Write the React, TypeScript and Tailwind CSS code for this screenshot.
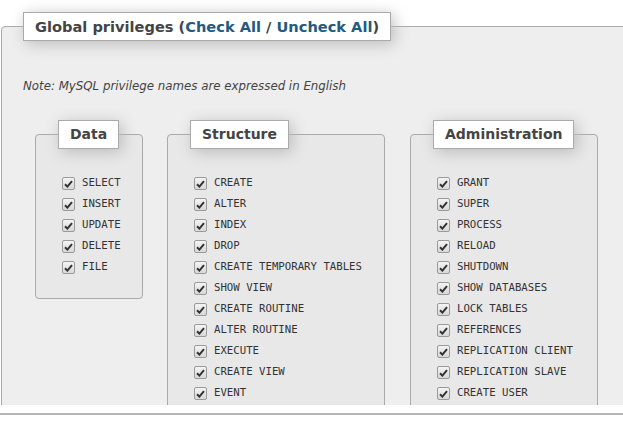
import React from "react";

type Group = {
  title: string;
  width: string;
  gap: string;
  privileges: string[];
};

const groups: Group[] = [
  {
    title: "Data",
    width: "w-[108px]",
    gap: "ml-[12px]",
    privileges: ["SELECT", "INSERT", "UPDATE", "DELETE", "FILE"],
  },
  {
    title: "Structure",
    width: "w-[218px]",
    gap: "ml-[24px]",
    privileges: [
      "CREATE",
      "ALTER",
      "INDEX",
      "DROP",
      "CREATE TEMPORARY TABLES",
      "SHOW VIEW",
      "CREATE ROUTINE",
      "ALTER ROUTINE",
      "EXECUTE",
      "CREATE VIEW",
      "EVENT",
    ],
  },
  {
    title: "Administration",
    width: "w-[188px]",
    gap: "ml-[25px]",
    privileges: [
      "GRANT",
      "SUPER",
      "PROCESS",
      "RELOAD",
      "SHUTDOWN",
      "SHOW DATABASES",
      "LOCK TABLES",
      "REFERENCES",
      "REPLICATION CLIENT",
      "REPLICATION SLAVE",
      "CREATE USER",
    ],
  },
];

function CheckBox() {
  return (
    <span className="flex h-[13px] w-[13px] shrink-0 items-center justify-center rounded-[2px] border border-[#9a9a9a] bg-gradient-to-b from-[#f4f4f4] to-[#d8d8d8]">
      <svg width="9" height="8" viewBox="0 0 9 8">
        <path
          d="M1 4.2 L3.4 6.6 L8 1.2"
          fill="none"
          stroke="#333"
          strokeWidth="2"
        />
      </svg>
    </span>
  );
}

function Legend({ children, className = "" }: { children: React.ReactNode; className?: string }) {
  return (
    <legend
      className={
        "border border-[#aaa] bg-white px-[11px] py-[5px] leading-[17px] font-bold text-[#444] shadow-[3px_3px_15px_#bbb] " +
        className
      }
    >
      {children}
    </legend>
  );
}

export default function App() {
  return (
    <div className="w-[623px] bg-white font-['DejaVu_Sans',sans-serif]">
      <div className="h-[405px] overflow-hidden">
        <fieldset className="ml-px mt-[12px] w-[680px] rounded-tl-[4px] border border-[#aaa] bg-[#eeeeee] pb-[40px] pl-[21px] pt-[38px]">
          <Legend className="text-[14.6px]">
            Global privileges (
            <a href="#" className="text-[#235a81]">
              Check All
            </a>{" "}
            /{" "}
            <a href="#" className="text-[#235a81]">
              Uncheck All
            </a>
            )
          </Legend>
          <p className="text-[11.8px] leading-[15px] text-[#444] italic">
            Note: MySQL privilege names are expressed in English
          </p>
          <div className="mt-[26px] flex items-start">
            {groups.map((group) => (
              <fieldset
                key={group.title}
                className={`${group.gap} ${group.width} rounded-[4px] border border-[#aaa] bg-[#e8e8e8] pb-[20px] pl-[26px] pt-[24px]`}
              >
                <Legend className="-ml-[4px] text-[14px]">{group.title}</Legend>
                {group.privileges.map((name) => (
                  <label
                    key={name}
                    className="flex h-[21px] items-center gap-[7px] font-['DejaVu_Sans_Mono',monospace] text-[10.7px] text-[#333]"
                  >
                    <CheckBox />
                    <span>{name}</span>
                  </label>
                ))}
              </fieldset>
            ))}
          </div>
        </fieldset>
      </div>
      <div className="mt-[8px] h-[22px] border-t-2 border-[#b5b5b5]" />
    </div>
  );
}
